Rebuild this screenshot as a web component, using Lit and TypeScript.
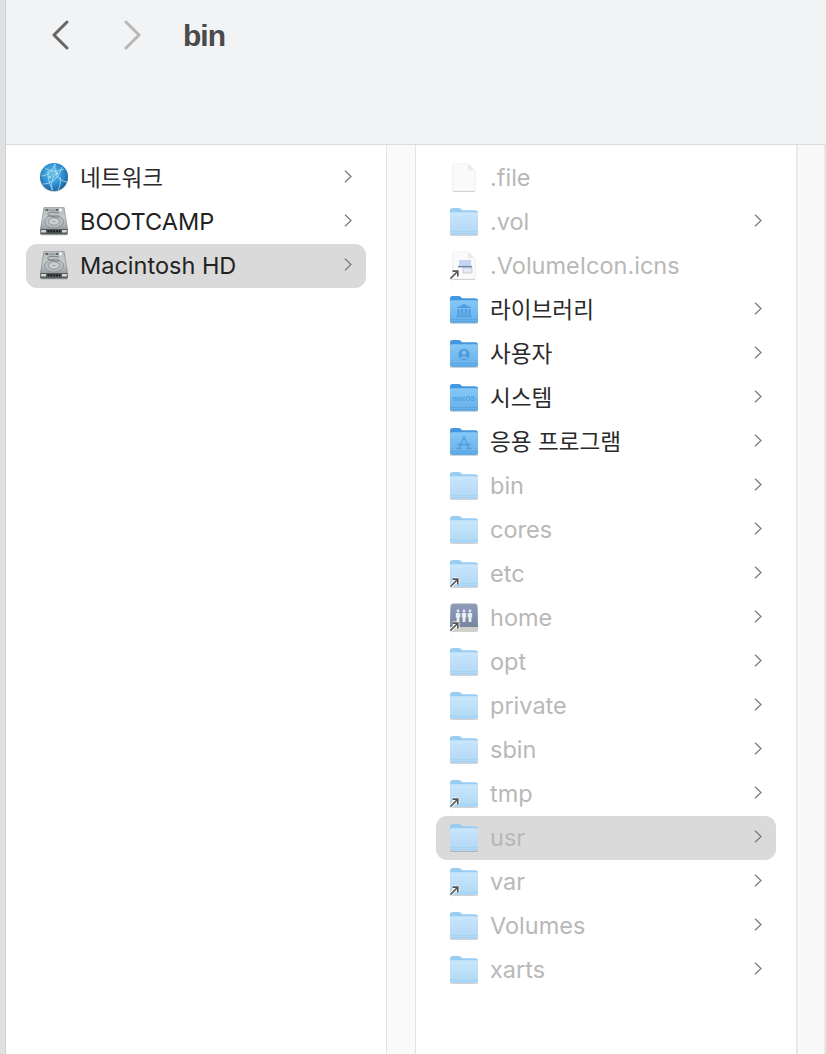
import { LitElement, html, css, svg } from "lit";
import { customElement } from "lit/decorators.js";

type IconKind =
  | "globe"
  | "disk"
  | "doc"
  | "preview"
  | "folder"
  | "library"
  | "user"
  | "macos"
  | "apps"
  | "home";

interface Row {
  label: string;
  icon: IconKind;
  dim?: boolean;
  alias?: boolean;
  selected?: boolean;
  chevron?: boolean;
  ko?: boolean;
}

const SIDEBAR: Row[] = [
  { label: "네트워크", icon: "globe", chevron: true, ko: true },
  { label: "BOOTCAMP", icon: "disk", chevron: true },
  { label: "Macintosh HD", icon: "disk", chevron: true, selected: true },
];

const FILES: Row[] = [
  { label: ".file", icon: "doc", dim: true },
  { label: ".vol", icon: "folder", dim: true, chevron: true },
  { label: ".VolumeIcon.icns", icon: "preview", dim: true, alias: true },
  { label: "라이브러리", icon: "library", chevron: true, ko: true },
  { label: "사용자", icon: "user", chevron: true, ko: true },
  { label: "시스템", icon: "macos", chevron: true, ko: true },
  { label: "응용 프로그램", icon: "apps", chevron: true, ko: true },
  { label: "bin", icon: "folder", dim: true, chevron: true },
  { label: "cores", icon: "folder", dim: true, chevron: true },
  { label: "etc", icon: "folder", dim: true, alias: true, chevron: true },
  { label: "home", icon: "home", dim: true, alias: true, chevron: true },
  { label: "opt", icon: "folder", dim: true, chevron: true },
  { label: "private", icon: "folder", dim: true, chevron: true },
  { label: "sbin", icon: "folder", dim: true, chevron: true },
  { label: "tmp", icon: "folder", dim: true, alias: true, chevron: true },
  { label: "usr", icon: "folder", dim: true, selected: true, chevron: true },
  { label: "var", icon: "folder", dim: true, alias: true, chevron: true },
  { label: "Volumes", icon: "folder", dim: true, chevron: true },
  { label: "xarts", icon: "folder", dim: true, chevron: true },
];

// shared gradients, the shadow root keeps the ids private
const defs = html`<svg width="0" height="0" class="defs">
  <defs>
    <linearGradient id="pale" x1="0" y1="0" x2="0" y2="1">
      <stop offset="0" stop-color="#c9e6fb" />
      <stop offset="1" stop-color="#b0d8f6" />
    </linearGradient>
    <linearGradient id="sat" x1="0" y1="0" x2="0" y2="1">
      <stop offset="0" stop-color="#86c7f5" />
      <stop offset="1" stop-color="#64afe9" />
    </linearGradient>
    <linearGradient id="steel" x1="0" y1="0" x2="0" y2="1">
      <stop offset="0" stop-color="#b4babd" />
      <stop offset="0.5" stop-color="#c8cdcf" />
      <stop offset="1" stop-color="#989fa3" />
    </linearGradient>
    <radialGradient id="earth" cx="0.45" cy="0.4" r="0.68">
      <stop offset="0" stop-color="#6cc6ea" />
      <stop offset="0.55" stop-color="#2f8fd2" />
      <stop offset="1" stop-color="#14548f" />
    </radialGradient>
    <linearGradient id="book" x1="0" y1="0" x2="0" y2="1">
      <stop offset="0" stop-color="#8f9dbb" />
      <stop offset="1" stop-color="#75859f" />
    </linearGradient>
  </defs>
</svg>`;

function folder(dark: boolean, glyph = svg``) {
  const back = dark ? "#4498e0" : "#98ccf3";
  const fill = dark ? "url(#sat)" : "url(#pale)";
  const line = dark ? "#4c9ade" : "#9accf0";
  return html`<svg class="icon" viewBox="0 0 28 28">
    <path d="M0 4Q0 1 2.5 1H8.5Q10 1 11 2.1L12 3.3H25.5Q28 3.3 28 6V10H0Z" fill="${back}" />
    <path d="M0 6.8Q0 5.3 1.5 5.3H26.5Q28 5.3 28 6.8V26Q28 28 26 28H2Q0 28 0 26Z" fill="${fill}" />
    <path d="M0 24.5H28M0 26.5H28" stroke="${line}" stroke-width=".7" opacity=".7" />
    ${glyph}
  </svg>`;
}

function doc(inner = svg``) {
  return html`<svg class="icon" viewBox="0 0 28 28">
    <path d="M3 1.5Q3 .5 4 .5H18L25 7.5V27Q25 28 24 28H4Q3 28 3 27Z" fill="#fafafa" stroke="#f0f0f0" stroke-width=".6" />
    <path d="M18 .5V6.5Q18 7.5 19 7.5H25Z" fill="#ebebeb" />
    ${inner}
  </svg>`;
}

function renderIcon(kind: IconKind) {
  const glyphColor = "#4f9cde";
  switch (kind) {
    case "globe":
      return html`<svg class="icon" viewBox="0 0 28 28">
        <circle cx="14" cy="14" r="14" fill="url(#earth)" />
        <path
          d="M5 5C10 9 17 9 24 6M1.5 13C8 12 12 9 15 1M15 1C14 10 18 18 27 19M3 21C10 21 18 17 22 4M12 27C11 20 12 14 17 10M8 8C8 15 9 21 13 27M20 14C21 19 20 24 18 27"
          fill="none"
          stroke="#c9effb"
          stroke-width=".8"
          opacity=".85"
        />
        <circle cx="10" cy="14" r="1" fill="#dff6fd" opacity=".8" />
        <circle cx="17" cy="10" r="1" fill="#dff6fd" opacity=".8" />
      </svg>`;
    case "disk":
      return html`<svg class="icon" viewBox="0 0 28 28">
        <path d="M4 .5Q4.2 0 5 0H23Q23.8 0 24 .5L27.6 22.5H.4Z" fill="url(#steel)" stroke="#7f8689" stroke-width=".6" />
        <rect x="5.5" y="2" width="13" height="2" fill="#5f6669" />
        <rect x="8" y="2.4" width="8" height="1.1" fill="#d5d9da" />
        <circle cx="20.5" cy="3" r="1.4" fill="#ffffff" />
        <ellipse cx="14" cy="14.5" rx="9.5" ry="6.5" fill="#b6bcbf" stroke="#7f8689" stroke-width=".7" />
        <ellipse cx="14" cy="14.5" rx="5.5" ry="3.7" fill="#c9cecf" stroke="#80878a" stroke-width=".7" />
        <ellipse cx="14" cy="14.5" rx="2.2" ry="1.5" fill="#a1a8ab" stroke="#eef0f1" stroke-width=".6" />
        <path d="M19 10C12 10 7 9 8 6.5C8.8 5 14 5 19 6" fill="none" stroke="#6a7174" stroke-width=".9" />
        <rect x=".3" y="22" width="27.4" height="5.5" rx="1" fill="#53585a" />
        <path d="M1.2 23H6V25.5H1.2ZM22 23H26.8V25.5H22Z" fill="#d4d8d9" />
        <path d="M7.5 24.3H20.5" stroke="#1d2021" stroke-width="2" stroke-dasharray="2 .8" />
      </svg>`;
    case "doc":
      return doc();
    case "preview":
      return doc(svg`
        <rect x="9" y="9" width="12" height="6.5" fill="#c4d4f2" />
        <rect x="8" y="15" width="14" height="1.4" fill="#6d7f9f" />
        <rect x="13" y="17" width="9" height="5" fill="#e6ebf4" stroke="#a0abc0" stroke-width=".5" />
      `);
    case "folder":
      return folder(false);
    case "library":
      return folder(
        true,
        svg`<g fill="${glyphColor}">
          <path d="M14 9L22 13H6Z" />
          <rect x="7.5" y="14" width="2.2" height="6" />
          <rect x="11" y="14" width="2.2" height="6" />
          <rect x="14.8" y="14" width="2.2" height="6" />
          <rect x="18.3" y="14" width="2.2" height="6" />
          <rect x="6" y="20.5" width="16" height="1.6" />
        </g>`
      );
    case "user":
      return folder(
        true,
        svg`<circle cx="14" cy="15.5" r="5.8" fill="${glyphColor}" />
        <circle cx="14" cy="13.8" r="2" fill="#86c4f2" />
        <path d="M10.4 19.4C11 17 17 17 17.6 19.4Z" fill="#86c4f2" />`
      );
    case "macos":
      return folder(
        true,
        svg`<text x="14" y="17.6" text-anchor="middle" class="macos">macOS</text>`
      );
    case "apps":
      return folder(
        true,
        svg`<path
          d="M14 9.5L9.5 21M14 9.5L18.5 21M8 17.5H20M7 21.5H10.5M17.5 21.5H21"
          fill="none"
          stroke="${glyphColor}"
          stroke-width="1.3"
          stroke-linecap="round"
        />`
      );
    case "home":
      return html`<svg class="icon" viewBox="0 0 28 28">
        <path d="M3 .5H25Q27 .5 27.5 3L28 25H0L.5 3Q1 .5 3 .5Z" fill="url(#book)" />
        <rect x="0" y="24" width="28" height="4" rx="1" fill="#cfd0ca" />
        <g fill="#e9edf4">
          <circle cx="8" cy="8" r="1.4" /><path d="M5.8 10H10.2V14.5H9.4V19H6.6V14.5H5.8Z" />
          <circle cx="14" cy="8" r="1.4" /><path d="M11.8 10H16.2V14.5H15.4V19H12.6V14.5H11.8Z" />
          <circle cx="20" cy="8" r="1.4" /><path d="M17.8 10H22.2V14.5H21.4V19H18.6V14.5H17.8Z" />
        </g>
      </svg>`;
  }
}

const aliasBadge = html`<svg class="alias" viewBox="0 0 11 11">
  <path d="M1.5 9.5L8 3M3.5 2.2H8.8V7.5" fill="none" stroke="#ffffff" stroke-width="3.4" stroke-linejoin="round" />
  <path d="M1.5 9.5L8 3M3.5 2.2H8.8V7.5" fill="none" stroke="#555555" stroke-width="1.7" />
</svg>`;

const chevron = html`<svg class="chevron" viewBox="0 0 8 13">
  <path d="M1 .8L7 6.5L1 12.2" fill="none" stroke="#7d7d7d" stroke-width="1.3" />
</svg>`;

@customElement("app-root")
export class AppRoot extends LitElement {
  static styles = css`
    :host {
      display: block;
      height: 1054px;
      overflow: hidden;
      background: #ffffff;
      font-family: Inter, "Noto Sans CJK KR", sans-serif;
    }

    .window {
      display: flex;
      height: 100%;
    }

    .edge {
      width: 5px;
      flex: none;
      background: #dfe0e2;
      border-right: 1px solid #d2d2d4;
    }

    .main {
      flex: 1;
      display: flex;
      flex-direction: column;
      min-width: 0;
    }

    .defs {
      position: absolute;
    }

    .toolbar {
      height: 124px;
      flex: none;
      background: #f2f3f5;
      border-bottom: 1px solid #dcdcdc;
      display: flex;
      align-items: flex-start;
      padding-left: 45px;
      padding-top: 20px;
    }

    .nav {
      width: 18px;
      height: 30px;
      flex: none;
    }

    .nav.forward {
      margin-left: 55px;
    }

    .title {
      margin: 1px 0 0 41px;
      font-size: 30px;
      line-height: 30px;
      font-weight: 700;
      letter-spacing: -1px;
      color: #4a4a4a;
      font-family: "Liberation Sans", sans-serif;
    }

    .columns {
      flex: 1;
      display: flex;
      min-height: 0;
    }

    .column {
      width: 380px;
      flex: none;
      padding: 11px 20px 0;
      box-sizing: border-box;
      background: #ffffff;
    }

    .gutter {
      width: 28px;
      flex: none;
      background: #fafafa;
      border-left: 1px solid #e4e4e4;
      border-right: 1px solid #e4e4e4;
    }

    .rest {
      flex: 1;
      background: #f9f9f9;
      border-left: 2px solid #e8e8e8;
      border-right: 2px solid #e8e8e8;
    }

    .row {
      height: 44px;
      display: flex;
      align-items: center;
      padding: 0 14px;
      border-radius: 11px;
    }

    .row.selected {
      background: #dadada;
    }

    .icon-wrap {
      position: relative;
      width: 28px;
      height: 28px;
      flex: none;
      margin-bottom: 2px;
      filter: drop-shadow(0 1px 0.6px rgba(0, 0, 0, 0.18));
    }

    .icon {
      display: block;
      width: 28px;
      height: 28px;
    }

    .macos {
      font-family: "Liberation Sans", sans-serif;
      font-size: 6.4px;
      font-weight: 700;
      fill: #4f9cde;
    }

    .alias {
      position: absolute;
      left: -1px;
      bottom: -1px;
      width: 11px;
      height: 11px;
    }

    .label {
      flex: 1;
      margin-left: 12px;
      font-size: 23.5px;
      line-height: 28px;
      color: #222222;
      white-space: nowrap;
    }

    .label.ko {
      font-size: 22.6px;
      color: #2a2a2a;
    }

    .row.dim .label {
      color: #b8b8b8;
    }

    .chevron {
      width: 8px;
      height: 13px;
      flex: none;
      margin-bottom: 3px;
    }
  `;

  renderRow(row: Row) {
    const cls = ["row", row.dim ? "dim" : "", row.selected ? "selected" : ""].join(" ");
    return html`<div class="${cls}">
      <div class="icon-wrap">${renderIcon(row.icon)}${row.alias ? aliasBadge : ""}</div>
      <span class="label ${row.ko ? "ko" : ""}">${row.label}</span>
      ${row.chevron ? chevron : ""}
    </div>`;
  }

  render() {
    return html`
      ${defs}
      <div class="window">
        <div class="edge"></div>
        <div class="main">
          <div class="toolbar">
            <svg class="nav" viewBox="0 0 18 30">
              <path d="M16 2L3 15L16 28" fill="none" stroke="#666666" stroke-width="3" stroke-linecap="round" stroke-linejoin="round" />
            </svg>
            <svg class="nav forward" viewBox="0 0 18 30">
              <path d="M2 2L15 15L2 28" fill="none" stroke="#b8b8b8" stroke-width="3" stroke-linecap="round" stroke-linejoin="round" />
            </svg>
            <div class="title">bin</div>
          </div>
          <div class="columns">
            <div class="column">${SIDEBAR.map((r) => this.renderRow(r))}</div>
            <div class="gutter"></div>
            <div class="column">${FILES.map((r) => this.renderRow(r))}</div>
            <div class="rest"></div>
          </div>
        </div>
      </div>
    `;
  }
}
